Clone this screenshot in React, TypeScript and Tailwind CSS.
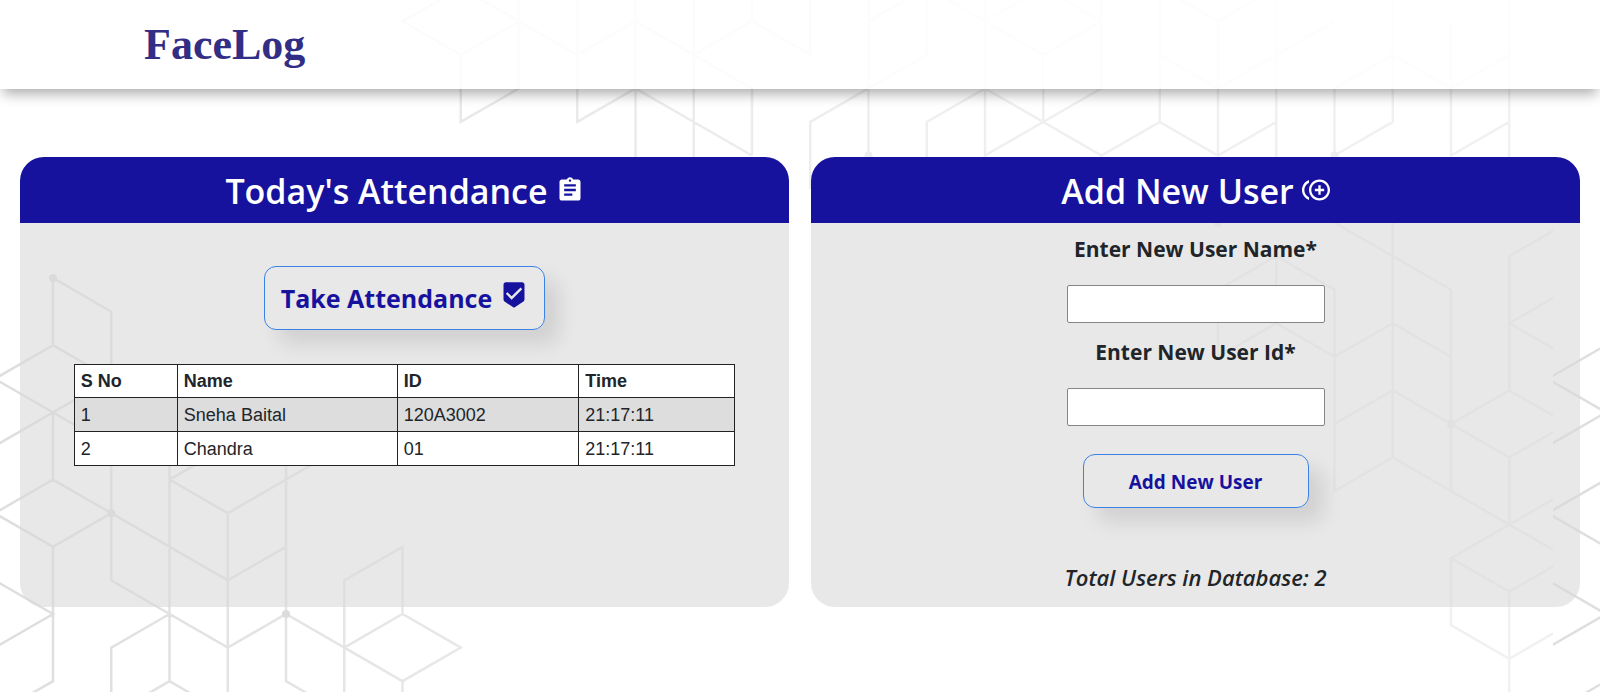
import React from "react";
import { MdAssignment, MdBeenhere, MdControlPointDuplicate } from "react-icons/md";

type Point = [number, number];

const TILE_WIDTH = 1553;
const COLUMN = 58.25;

// Polylines on two isometric grids; each point is [column, half-row].
const leftLines: Point[][] = [
  [[0, 2], [0, 0], [1, 1], [1, 9], [3, 11], [4, 10], [6, 12], [7, 11], [6, 10], [5, 11]],
  [[-1, 3], [0, 2], [1, 3]],
  [[-1, 3], [1, 5]],
  [[-1, 5], [0, 4], [1, 3]],
  [[0, 4], [0, 6], [-1, 7], [0, 8], [1, 7], [0, 6]],
  [[0, 8], [0, 12], [-1, 13]],
  [[1, 7], [3, 9], [4, 8]],
  [[2, 5], [2, 12], [1, 13]],
  [[2, 12], [3, 13]],
  [[3, 5], [2, 6], [3, 7], [5, 5]],
  [[3, 7], [3, 13]],
  [[4, 5], [4, 12], [5, 13]],
  [[2, 10], [1, 11], [1, 13]],
  [[-1, 9], [0, 10], [-1, 11]],
  [[5, 13], [5, 9], [6, 8], [6, 10]],
  [[6, 12], [6, 13]],
];

const rightLines: Point[][] = [
  [[7, -1], [6, 0], [7, 1], [8, 0], [7, -1]],
  [[7, 1], [7, 3], [8, 2], [8, -1]],
  [[8, 0], [9, 1], [10, 0], [11, 1], [12, 0], [13, 1], [13, -1]],
  [[9, -1], [9, 3], [10, 2], [12, 4]],
  [[10, -1], [10, 5]],
  [[11, -1], [11, 5]],
  [[11, 1], [12, 2], [12, 4]],
  [[12, -1], [12, 0]],
  [[14, -1], [14, 4]],
  [[13, 5], [13, 3], [14, 2], [15, 1], [15, -1]],
  [[14, 0], [15, -1], [16, 0], [17, -1], [18, 0], [17, 1], [16, 0]],
  [[15, 5], [15, 3], [16, 2], [18, 4], [19, 3], [20, 4], [21, 3]],
  [[16, -1], [16, 5]],
  [[17, 1], [17, 3]],
  [[16, 4], [18, 2], [18, -1]],
  [[19, -1], [20, 0], [21, -1]],
  [[19, -1], [19, 3]],
  [[20, 0], [20, 5]],
  [[19, 1], [20, 2], [22, 0]],
  [[21, -1], [21, 5]],
  [[22, 4], [22, 2]],
  [[22, 4], [23, 3], [23, -1]],
  [[22, 2], [23, 1], [24, 2], [25, 1]],
  [[24, 0], [24, 4], [25, 3]],
  [[25, -1], [25, 5]],
  [[22, 6], [24, 8], [24, 14]],
  [[23, 5], [23, 13]],
  [[20, 10], [20, 8], [21, 7], [22, 8], [22, 14], [23, 13], [26, 16], [25, 17], [24, 16]],
  [[21, 7], [21, 9]],
  [[20, 10], [21, 9], [22, 10], [23, 9], [24, 10]],
  [[22, 12], [23, 11], [25, 13], [26, 12]],
  [[24, 12], [25, 11], [26, 12]],
  [[26, 6], [25, 7], [25, 11]],
  [[26, 8], [25, 9], [26, 10]],
  [[25, 13], [25, 15], [26, 14]],
  [[25, 15], [24, 16], [24, 18], [25, 19], [26, 18]],
  [[25, 17], [25, 21]],
];

const leftDots: Point[] = [[0, 0], [1, 7], [4, 10]];
const rightDots: Point[] = [[14, 4], [22, 4], [20, 6], [24, 12]];

const place = (top: number, row: number) => ([column, half]: Point): Point => [
  53 + COLUMN * column,
  top + row * half,
];
const onLeft = place(278, 33.6);
const onRight = place(21.3, 33.55);

const toPath = (lines: Point[][], map: (p: Point) => Point) =>
  lines.map((line) => "M" + line.map((p) => map(p).join(" ")).join("L")).join("");

function Backdrop() {
  return (
    <svg aria-hidden="true" className="absolute inset-0 -z-10 h-full w-full">
      <defs>
        <linearGradient id="fade" gradientUnits="userSpaceOnUse" x1="0" y1="0" x2={TILE_WIDTH} y2="0">
          <stop offset="0" stopColor="#dedede" />
          <stop offset="0.3" stopColor="#e8e8e8" />
          <stop offset="0.6" stopColor="#efefef" />
          <stop offset="1" stopColor="#f1f1f1" />
        </linearGradient>
        <clipPath id="tile-edge">
          <rect width={TILE_WIDTH} height="2000" />
        </clipPath>
        <g id="tile" clipPath="url(#tile-edge)">
          <path d={toPath(leftLines, onLeft) + toPath(rightLines, onRight)} fill="none" stroke="url(#fade)" strokeWidth="2.5" />
          {leftDots.map(onLeft).map(([x, y]) => (
            <circle key={`${x} ${y}`} cx={x} cy={y} r="4" fill="#dcdcdc" />
          ))}
          {rightDots.map(onRight).map(([x, y]) => (
            <circle key={`${x} ${y}`} cx={x} cy={y} r="4" fill="#eeeeee" />
          ))}
        </g>
      </defs>
      <use href="#tile" />
      <use href="#tile" x={TILE_WIDTH} />
    </svg>
  );
}

function Panel({ title, icon, children }: { title: string; icon: React.ReactNode; children: React.ReactNode }) {
  return (
    <section className="flex min-w-0 flex-col overflow-hidden rounded-3xl bg-[#d9d9d9]/60">
      <h2 className="flex h-[66px] items-center justify-center gap-2 bg-[#17129e] pt-0.5 text-[34px] font-semibold text-white">
        {title}
        {icon}
      </h2>
      {children}
    </section>
  );
}

const records = [
  { id: "120A3002", name: "Sneha Baital", time: "21:17:11" },
  { id: "01", name: "Chandra", time: "21:17:11" },
];

const cell = "border border-[#222222] px-1.5 py-0";
const button =
  "flex items-center justify-center rounded-xl border border-[#3b82e6] font-bold text-[#17129e] shadow-[14px_14px_20px_rgba(0,0,0,0.1)]";
const label = "text-[21px] leading-7 font-bold";
const field = "mt-[22px] h-[38px] w-[258px] rounded-xs border border-[#858585] bg-white px-2 text-lg";

export default function App() {
  return (
    <div className="relative isolate min-h-screen overflow-hidden bg-white font-['Open_Sans','Noto_Sans',sans-serif] text-[#212529]">
      <Backdrop />
      <header className="flex h-[89px] items-center bg-white/85 px-36 shadow-[0_8px_12px_-3px_rgba(0,0,0,0.32)]">
        <h1 className="font-['Liberation_Serif',serif] text-[44px] font-bold text-[#322e85]">FaceLog</h1>
      </header>

      <main className="grid grid-cols-2 gap-[22px] px-5 pt-[68px]">
        <Panel title="Today's Attendance" icon={<MdAssignment className="mb-0.5 size-7" />}>
          <div className="flex flex-col items-center pt-[43px]">
            <button type="button" className={`${button} h-16 w-[281px] gap-2 pt-0.5 text-[25px]`}>
              Take Attendance
              <MdBeenhere className="mb-2 size-7" />
            </button>
            <table className="mt-[34px] w-[86%] table-fixed border-collapse bg-white text-left font-['Liberation_Sans',sans-serif] text-lg">
              <thead>
                <tr className="h-[33px]">
                  <th className={`${cell} w-[15.6%]`}>S No</th>
                  <th className={`${cell} w-[33.3%]`}>Name</th>
                  <th className={`${cell} w-[27.5%]`}>ID</th>
                  <th className={cell}>Time</th>
                </tr>
              </thead>
              <tbody>
                {records.map((record, index) => (
                  <tr key={record.id} className="h-[34px] odd:bg-[#dddddd]">
                    <td className={cell}>{index + 1}</td>
                    <td className={cell}>{record.name}</td>
                    <td className={cell}>{record.id}</td>
                    <td className={cell}>{record.time}</td>
                  </tr>
                ))}
              </tbody>
            </table>
          </div>
        </Panel>

        <Panel title="Add New User" icon={<MdControlPointDuplicate className="mb-0.5 size-7" />}>
          <form className="flex flex-col items-center pt-3 pb-3.5" onSubmit={(event) => event.preventDefault()}>
            <label htmlFor="user-name" className={label}>
              Enter New User Name*
            </label>
            <input id="user-name" type="text" className={field} />
            <label htmlFor="user-id" className={`${label} mt-[15px]`}>
              Enter New User Id*
            </label>
            <input id="user-id" type="text" className={field} />
            <button type="submit" className={`${button} mt-7 h-[54px] w-[226px] pt-0.5 text-[19px]`}>
              Add New User
            </button>
            <p className="mt-[53px] text-[22px] leading-8 font-semibold italic">
              Total Users in Database: {records.length}
            </p>
          </form>
        </Panel>
      </main>
    </div>
  );
}
